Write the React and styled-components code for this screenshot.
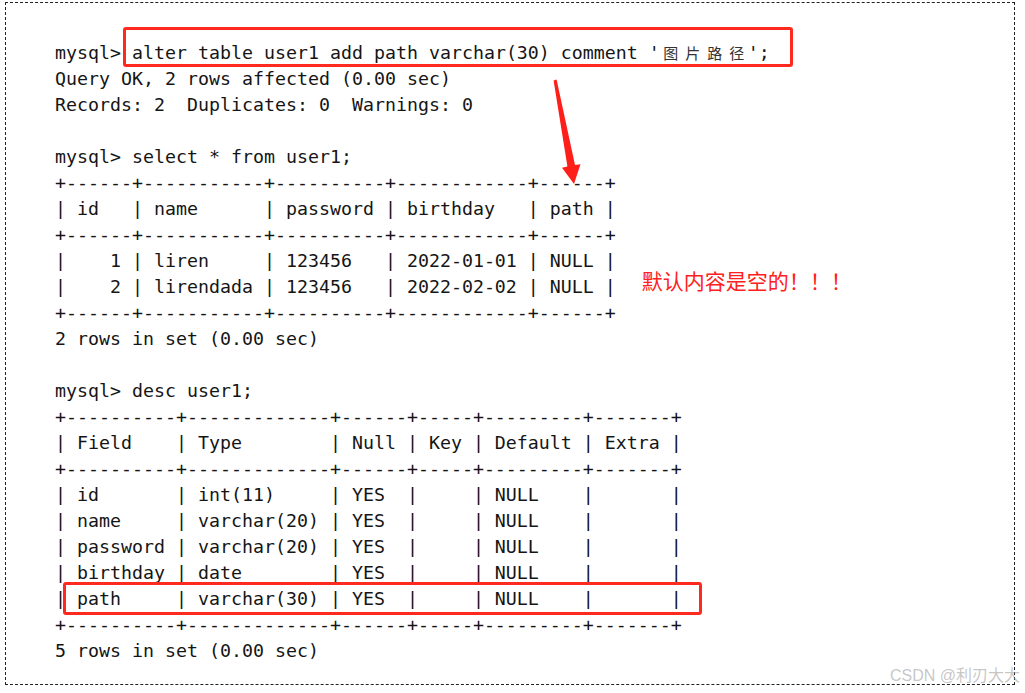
import React from 'react'
import styled, { createGlobalStyle } from 'styled-components'

const GlobalStyle = createGlobalStyle`
  html, body {
    margin: 0;
    padding: 0;
    background: #ffffff;
  }
`

const firstTable = [
  '+------+-----------+----------+------------+------+',
  '| id   | name      | password | birthday   | path |',
  '+------+-----------+----------+------------+------+',
  '|    1 | liren     | 123456   | 2022-01-01 | NULL |',
  '|    2 | lirendada | 123456   | 2022-02-02 | NULL |',
  '+------+-----------+----------+------------+------+',
]

const descBorder = '+----------+-------------+------+-----+---------+-------+'
const descTop = [
  descBorder,
  '| Field    | Type        | Null | Key | Default | Extra |',
  descBorder,
  '| id       | int(11)     | YES  |     | NULL    |       |',
  '| name     | varchar(20) | YES  |     | NULL    |       |',
  '| password | varchar(20) | YES  |     | NULL    |       |',
  '| birthday | date        | YES  |     | NULL    |       |',
]
const pathRow = '| path     | varchar(30) | YES  |     | NULL    |       |'

function App() {
  return (
    <Page>
      <GlobalStyle />
      <Frame>
        <Console>
          <Line>
            {'mysql> '}
            <Marked $top={-13} $right={-23} $bottom={-1} $left={-9}>
              {"alter table user1 add path varchar(30) comment '"}
              {['图', '片', '路', '径'].map((c) => (
                <Wide key={c}>{c}</Wide>
              ))}
              {"';"}
            </Marked>
          </Line>
          <Line>Query OK, 2 rows affected (0.00 sec)</Line>
          <Line>Records: 2  Duplicates: 0  Warnings: 0</Line>
          <Line />
          <Line>mysql&gt; select * from user1;</Line>
          <ResultRow>
            <div>
              {firstTable.map((row, i) => (
                <Line key={i}>{row}</Line>
              ))}
            </div>
            <Note>默认内容是空的！！！</Note>
          </ResultRow>
          <Line>2 rows in set (0.00 sec)</Line>
          <Line />
          <Line>mysql&gt; desc user1;</Line>
          {descTop.map((row, i) => (
            <Line key={i}>{row}</Line>
          ))}
          <Line>
            <Marked $top={-4} $right={-20} $bottom={-3} $left={8}>
              {pathRow}
            </Marked>
          </Line>
          <Line>{descBorder}</Line>
          <Line>5 rows in set (0.00 sec)</Line>
        </Console>
        <Arrow viewBox="545 75 45 115" width="45" height="115">
          <polygon
            points="553.6,80.4 556.6,79.6 575,165 580.5,164.2 574,184 562,167.8 567.4,166.6"
            fill="#ff1f1a"
          />
        </Arrow>
      </Frame>
      <Watermark>CSDN @利刃大大</Watermark>
    </Page>
  )
}

const Page = styled.div`
  position: relative;
  width: 1025px;
  height: 693px;
  overflow: hidden;
  background: #ffffff;
`

const Frame = styled.div`
  position: relative;
  box-sizing: border-box;
  margin: 2px 0 0 5px;
  width: 1010px;
  height: 683px;
  border: 1px dashed #222222;
  padding: 37px 0 0 49px;
`

const Console = styled.div`
  display: flex;
  flex-direction: column;
  font-family: "DejaVu Sans Mono", "Liberation Mono", monospace;
  font-size: 18.27px;
  color: #151515;
`

const Line = styled.div`
  height: 26px;
  line-height: 26px;
  white-space: pre;
`

const Marked = styled.span`
  position: relative;
  display: inline-block;
  &::after {
    content: '';
    position: absolute;
    top: ${(p) => p.$top}px;
    right: ${(p) => p.$right}px;
    bottom: ${(p) => p.$bottom}px;
    left: ${(p) => p.$left}px;
    border: 3px solid #ff2a1f;
    border-radius: 3px;
    pointer-events: none;
  }
`

const Wide = styled.span`
  display: inline-block;
  width: 22px;
  text-align: center;
  font-family: "Noto Sans CJK SC", sans-serif;
  font-size: 15px;
  color: #333333;
`

const ResultRow = styled.div`
  display: flex;
  align-items: flex-start;
`

const Note = styled.div`
  margin: 98px 0 0 26px;
  font-family: "Noto Sans CJK SC", sans-serif;
  font-size: 21px;
  line-height: 24px;
  color: #ff2020;
  white-space: nowrap;
`

const Arrow = styled.svg`
  position: absolute;
  left: 539px;
  top: 72px;
  overflow: visible;
`

const Watermark = styled.div`
  position: absolute;
  top: 665px;
  right: 5px;
  font-family: "Liberation Sans", "Noto Sans CJK SC", sans-serif;
  font-size: 16px;
  line-height: 22px;
  color: rgba(150, 150, 150, 0.55);
  white-space: nowrap;
`

export default App
